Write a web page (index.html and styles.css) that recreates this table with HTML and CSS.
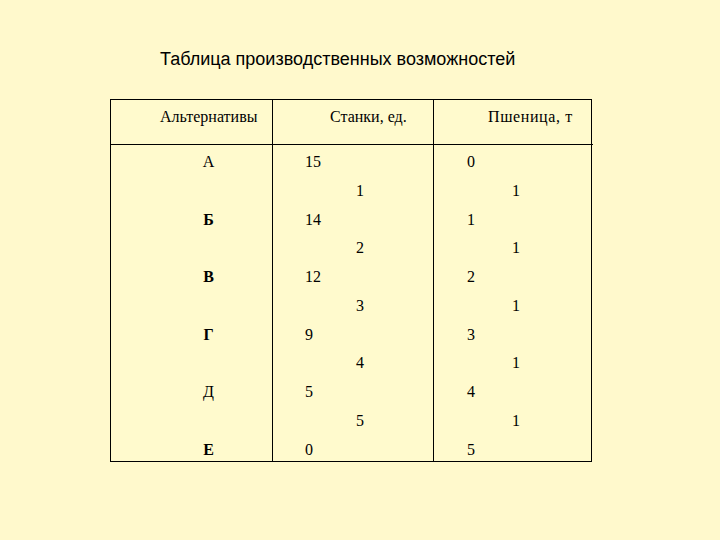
FILE: index.html
```html
<!DOCTYPE html>
<html lang="ru">
<head>
<meta charset="utf-8">
<title>Таблица производственных возможностей</title>
<link rel="stylesheet" href="styles.css">
</head>
<body>
<div class="slide">
  <h1 class="title">Таблица производственных возможностей</h1>
  <div class="ppf">
    <div class="cell head h1">Альтернативы</div>
    <div class="cell head h2">Станки, ед.</div>
    <div class="cell head h3">Пшеница, т</div>

    <div class="cell body letters">
      <div class="ln">А</div>
      <div class="ln"></div>
      <div class="ln b">Б</div>
      <div class="ln"></div>
      <div class="ln b">В</div>
      <div class="ln"></div>
      <div class="ln b">Г</div>
      <div class="ln"></div>
      <div class="ln">Д</div>
      <div class="ln"></div>
      <div class="ln b">Е</div>
    </div>
    <div class="cell body machines">
      <div class="ln v">15</div>
      <div class="ln d">1</div>
      <div class="ln v">14</div>
      <div class="ln d">2</div>
      <div class="ln v">12</div>
      <div class="ln d">3</div>
      <div class="ln v">9</div>
      <div class="ln d">4</div>
      <div class="ln v">5</div>
      <div class="ln d">5</div>
      <div class="ln v">0</div>
    </div>
    <div class="cell body wheat">
      <div class="ln v">0</div>
      <div class="ln d">1</div>
      <div class="ln v">1</div>
      <div class="ln d">1</div>
      <div class="ln v">2</div>
      <div class="ln d">1</div>
      <div class="ln v">3</div>
      <div class="ln d">1</div>
      <div class="ln v">4</div>
      <div class="ln d">1</div>
      <div class="ln v">5</div>
    </div>
  </div>
</div>
</body>
</html>
```
FILE: styles.css
```css
html, body {
  margin: 0;
  padding: 0;
  background: #fff9cc;
}
.slide {
  width: 720px;
  height: 540px;
  padding: 0 0 0 110px;
  box-sizing: border-box;
}
.title {
  margin: 0;
  padding: 49px 0 0 50px;
  font-family: "Liberation Sans", Arial, sans-serif;
  font-weight: normal;
  font-size: 18px;
  line-height: 21px;
  color: #000;
  height: 99px;
  box-sizing: border-box;
}
.ppf {
  display: grid;
  grid-template-columns: 162px 161px 159px;
  grid-template-rows: 45px 316px;
  width: 482px;
  border: 1px solid #000;
  box-sizing: border-box;
  font-family: "Liberation Serif", "Times New Roman", serif;
  font-size: 16px;
  color: #000;
  background: #fffacd;
}
.cell {
  border-right: 1px solid #000;
  box-sizing: border-box;
}
.cell.h3, .cell.wheat {
  border-right: none;
}
.head {
  border-bottom: 1px solid #000;
  padding-top: 8px;
  line-height: 18px;
}
.h1 { padding-left: 49px; }
.h2 { padding-left: 57px; }
.h3 { padding-left: 54px; letter-spacing: 0.6px; }
.body {
  padding-top: 3px;
  line-height: 28.75px;
}
.ln {
  height: 28.75px;
  white-space: nowrap;
}
.letters .ln {
  padding-left: 34px;
  text-align: center;
}
.letters .ln.b {
  font-weight: bold;
}
.machines .v { padding-left: 32px; }
.machines .d { padding-left: 83px; }
.wheat .v { padding-left: 33px; }
.wheat .d { padding-left: 78px; }
```
